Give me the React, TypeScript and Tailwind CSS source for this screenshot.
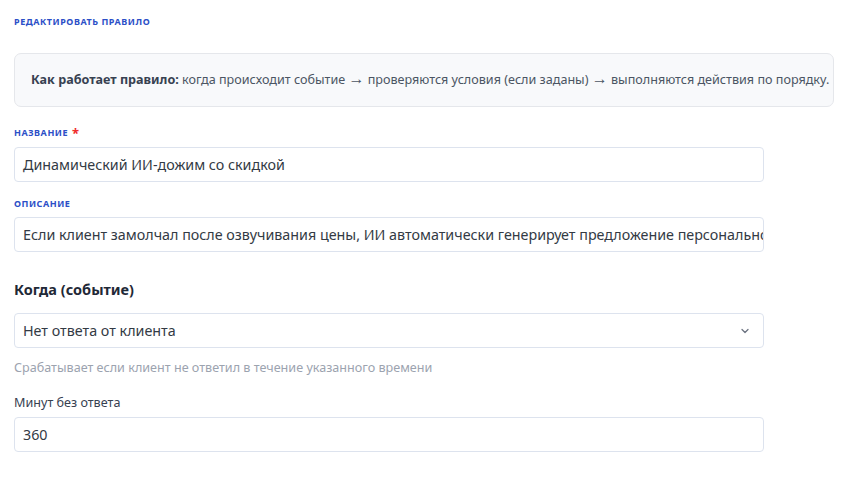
import React from "react";

function Chevron() {
  return (
    <svg width="12" height="12" viewBox="0 0 24 24" fill="none" stroke="#6b7280" strokeWidth="2.5" strokeLinecap="round" strokeLinejoin="round">
      <path d="M6 9l6 6 6-6" />
    </svg>
  );
}

function Arrow() {
  return <span className="text-[16px] leading-none font-[Noto_Sans]">→</span>;
}

export default function App() {
  const font = { fontFamily: '"Noto Sans", "Open Sans", sans-serif' };
  return (
    <div className="w-[850px] h-[484px] bg-white" style={font}>
      <div className="pl-[14px] pr-[16px] pt-[16px]">
        <div className="text-[9px] font-bold uppercase tracking-[0.06em] text-[#2c4fc7] leading-[12px]">
          Редактировать правило
        </div>
        <div className="mt-[25px] h-[54px] rounded-[7px] border border-[#e5e7eb] bg-[#f8f9fb] flex items-center pl-[16px] text-[12.6px] text-[#4b5563] whitespace-nowrap">
          <span className="font-bold text-[#374151]">Как работает правило:</span>
          <span>
            &nbsp;когда происходит событие <Arrow /> проверяются условия (если заданы) <Arrow /> выполняются действия по порядку.
          </span>
        </div>
        <div className="w-[750px]">
          <div className="mt-[20px] flex items-center text-[9px] font-bold uppercase tracking-[0.06em] text-[#2c4fc7] leading-[12px]">
            Название <span className="ml-[4px] text-[#ef2b2b] text-[13px] leading-[10px]">*</span>
          </div>
          <div className="mt-[8px] h-[35px] rounded-[4px] border border-[#dde3ee] flex items-center px-[8px] text-[14.3px] text-[#333a44] whitespace-nowrap overflow-hidden">
            Динамический ИИ-дожим со скидкой
          </div>
          <div className="mt-[16px] text-[9px] font-bold uppercase tracking-[0.06em] text-[#2c4fc7] leading-[12px]">
            Описание
          </div>
          <div className="mt-[7px] h-[35px] rounded-[4px] border border-[#dde3ee] flex items-center px-[8px] text-[14.3px] text-[#333a44] whitespace-nowrap overflow-hidden">
            Если клиент замолчал после озвучивания цены, ИИ автоматически генерирует предложение персональной скидки
          </div>
          <div className="mt-[27px] text-[14.5px] font-bold text-[#1f2937] leading-[20px]">Когда (событие)</div>
          <div className="mt-[14px] h-[35px] rounded-[4px] border border-[#dde3ee] flex items-center justify-between pl-[8px] pr-[12px] text-[14.3px] text-[#333a44]">
            <span>Нет ответа от клиента</span>
            <Chevron />
          </div>
          <div className="mt-[11px] text-[12.6px] text-[#9ca3af] leading-[18px]">
            Срабатывает если клиент не ответил в течение указанного времени
          </div>
          <div className="mt-[17px] text-[12.6px] text-[#374151] leading-[18px]">Минут без ответа</div>
          <div className="mt-[5px] h-[35px] rounded-[4px] border border-[#dde3ee] flex items-center px-[8px] text-[14.3px] text-[#333a44]">
            360
          </div>
        </div>
      </div>
    </div>
  );
}
